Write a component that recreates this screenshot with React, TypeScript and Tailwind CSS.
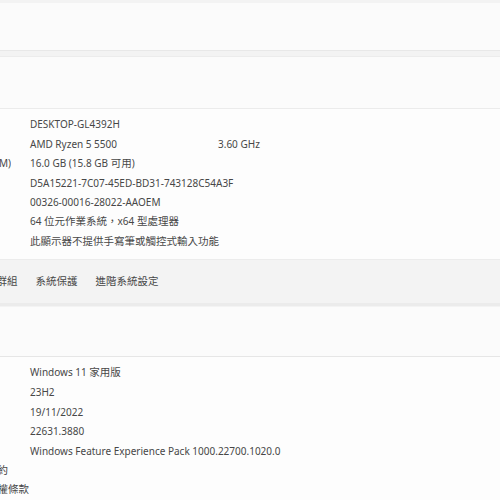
import React from "react";

const font = { fontFamily: '"Noto Sans", "Noto Sans CJK TC", sans-serif' };

type Row = { label: string; value: string; extra?: string; showLabel?: boolean };

const specs: Row[] = [
  { label: "裝置名稱", value: "DESKTOP-GL4392H" },
  { label: "處理器", value: "AMD Ryzen 5 5500", extra: "3.60 GHz" },
  { label: "已安裝的記憶體(RAM)", value: "16.0 GB (15.8 GB 可用)", showLabel: true },
  { label: "裝置識別碼", value: "D5A15221-7C07-45ED-BD31-743128C54A3F" },
  { label: "產品識別碼", value: "00326-00016-28022-AAOEM" },
  { label: "系統類型", value: "64 位元作業系統，x64 型處理器" },
  { label: "手寫筆與觸控", value: "此顯示器不提供手寫筆或觸控式輸入功能" },
];

const winSpecs: Row[] = [
  { label: "版本", value: "Windows 11 家用版" },
  { label: "版本", value: "23H2" },
  { label: "安裝於", value: "19/11/2022" },
  { label: "OS 組建", value: "22631.3880" },
  { label: "體驗", value: "Windows Feature Experience Pack 1000.22700.1020.0" },
];

// CJK runs get a touch bigger than the latin text
function Txt({ s }: { s: string }) {
  const parts = s.split(/([\u3000-\u9fff\uff00-\uffef]+)/);
  return (
    <>
      {parts.map((p, i) =>
        /[\u3000-\u9fff\uff00-\uffef]/.test(p) ? (
          <span key={i} className="text-[10.5px]">{p}</span>
        ) : (
          <span key={i}>{p}</span>
        )
      )}
    </>
  );
}

// label column sits mostly off the left edge, only the tail shows
function SpecRow({ row }: { row: Row }) {
  return (
    <div className="flex items-center h-[19.5px] whitespace-nowrap">
      <div className="w-[11px] shrink-0 overflow-hidden flex justify-end">
        <span className="shrink-0">{row.showLabel ? <Txt s={row.label} /> : ""}</span>
      </div>
      <div className="ml-[19px] w-[188px] shrink-0">
        <Txt s={row.value} />
      </div>
      {row.extra && <div>{row.extra}</div>}
    </div>
  );
}

export default function App() {
  return (
    <div
      className="w-[500px] h-[500px] overflow-hidden bg-[#f3f3f3] text-[10px] text-[#474747] pt-[3px]"
      style={font}
    >
      {/* top card */}
      <div className="h-[48px] bg-[#fbfbfb] border-b border-[#e8e8e8]"></div>

      {/* device specs */}
      <div className="mt-[5px] bg-[#fbfbfb] border-t border-[#ececec]">
        <div className="h-[52px] border-b border-[#ebebeb]"></div>
        <div className="bg-[#fdfdfd] pt-[6px] pb-[7.5px]">
          {specs.map((r, i) => (
            <SpecRow key={i} row={r} />
          ))}
        </div>
        <div className="h-[47px] bg-[#f3f3f3] border-t border-[#ececec] border-b-[3px] border-b-[#ebebeb] flex items-center gap-[18px] overflow-hidden whitespace-nowrap text-[10.5px]">
          <span className="-ml-[56px] shrink-0">網域或工作群組</span>
          <span className="shrink-0">系統保護</span>
          <span className="shrink-0">進階系統設定</span>
        </div>
      </div>

      {/* windows specs */}
      <div className="mt-[1px] bg-[#fbfbfb]">
        <div className="h-[50px] border-b border-[#e6e6e6]"></div>
        <div className="bg-[#fdfdfd] pt-[6.5px] h-[200px]">
          {winSpecs.map((r, i) => (
            <SpecRow key={i} row={r} />
          ))}
          <div className="h-[19px] flex items-center text-[10.5px]">
            <div className="w-[8px] overflow-hidden flex justify-end whitespace-nowrap">
              <span className="shrink-0">Microsoft 服務合約</span>
            </div>
          </div>
          <div className="h-[19px] flex items-center text-[10.5px]">
            <div className="w-[29px] overflow-hidden flex justify-end whitespace-nowrap">
              <span className="shrink-0">Microsoft 軟體授權條款</span>
            </div>
          </div>
        </div>
      </div>
    </div>
  );
}
